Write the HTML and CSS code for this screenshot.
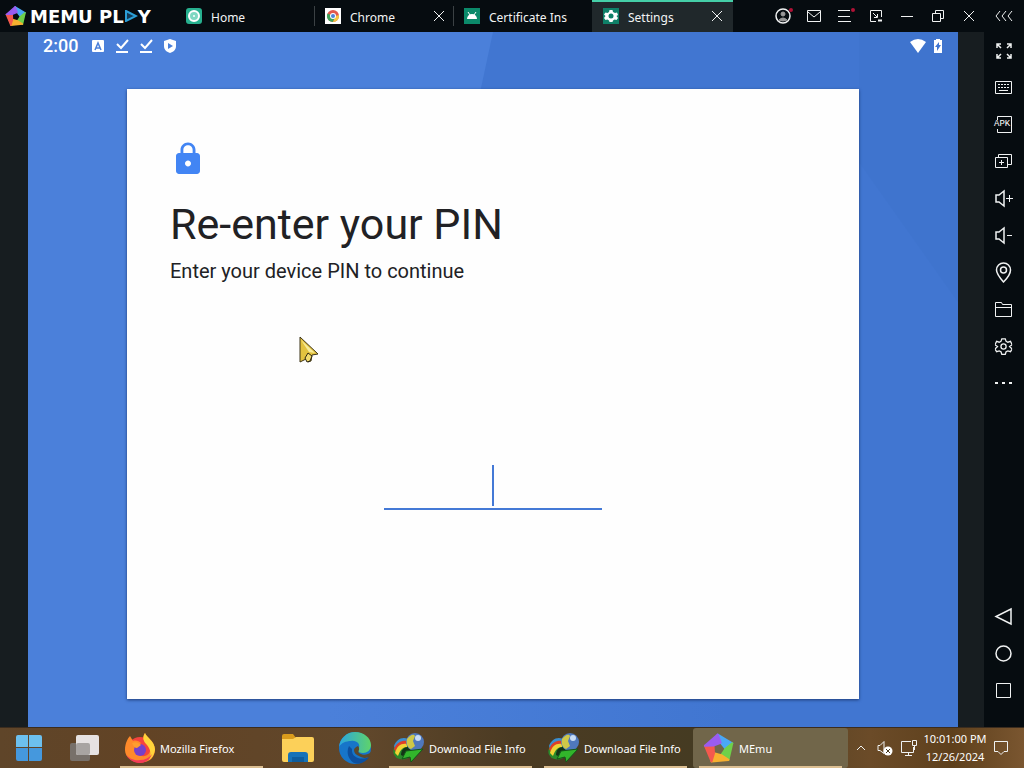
FILE: index.html
```html
<!DOCTYPE html>
<html lang="en">

<head>
    <meta charset="UTF-8">
    <meta name="viewport" content="width=device-width, initial-scale=1.0">
    <title>MEmu - Settings</title>
    <link rel="stylesheet" href="styles.css">
</head>

<body>
    <!-- shared shapes -->
    <svg class="defs" width="0" height="0" aria-hidden="true">
        <symbol id="memu" viewBox="0 0 32 32">
            <g stroke-width="2" stroke-linejoin="round">
                <path fill="#4aa8f5" stroke="#4aa8f5" d="M14.700 2.600 29.300 11.300 22.500 16.700 17.700 10.700z" />
                <path fill="#6fd04a" stroke="#6fd04a" d="M29.300 11.300 25.500 27.900 18.300 23.100 22.500 16.700z" />
                <path fill="#f7b02f" stroke="#f7b02f" d="M25.500 27.900 8.500 29.400 11 21.100 18.300 23.100z" />
                <path fill="#f4594e" stroke="#f4594e" d="M8.500 29.400 1.900 13.700 10.500 13.500 11 21.100z" />
                <path fill="#9a5cf0" stroke="#9a5cf0" d="M1.900 13.700 14.700 2.600 17.700 10.700 10.500 13.500z" />
            </g>
        </symbol>
        <symbol id="idm" viewBox="0 0 32 32">
            <ellipse cx="11" cy="18" rx="11" ry="9" fill="#2a8a2a" transform="rotate(-25 11 18)" />
            <path fill="#3b8fd0" d="M1 14C3 8 9 4 15 7l-1 3C9 9 5 11 2 17z" />
            <path fill="#dd3f28" d="M1 17C4 10 9 8 15 9l-1 3C9 12 6 14 3 20z" />
            <path fill="#f0d235" d="M2 21c2-7 6-10 12-9v3c-4 0-7 3-9 9z" />
            <path fill="#123417" d="M8 23c0-5 3-8 7-8l4 5-7 5z" />
            <circle cx="22" cy="10" r="9" fill="#4f78bd" />
            <path fill="#cfc848" d="M14 7c4-5 7-5 8-3l-2 5 2 5-4 3c-4-2-5-6-4-10z" />
            <circle cx="25" cy="6" r="3" fill="#c9dcf5" />
            <path fill="#32b52b" stroke="#14551a" d="M13 19l17-2-12 13-1-5-8 2z" />
        </symbol>
        <symbol id="download-done" viewBox="0 0 16 16">
            <path fill="none" stroke="#fff" stroke-width="2" d="M3 6l4 4 7-8M2 14h12" />
        </symbol>
        <symbol id="close" viewBox="0 0 12 12">
            <path d="M1 1l10 10M11 1L1 11" />
        </symbol>
        <symbol id="gear" viewBox="0 0 20 20">
            <path d="M8 1h4l1 3 2 1 3-1 2 4-3 2 3 3-2 3-3-1-2 1-1 3H8l-1-3-2-1-3 1-2-3 3-3-3-2 2-4 3 1 2-1z" />
            <circle cx="10" cy="10" r="3" />
        </symbol>
    </svg>

    <header id="titlebar">
        <div class="brand">
            <svg width="22" height="22"><use href="#memu" /></svg>
            <span class="brand-name">MEMU PL<svg width="14" height="12" viewBox="0 0 14 12"><path fill="#123a56" stroke="#2b9fd8" stroke-width="2" d="M2 1l10 5-10 5z" /></svg>Y</span>
        </div>
        <nav class="tabs">
            <div class="tab">
                <svg class="tab-icon" viewBox="0 0 16 16">
                    <rect width="16" height="16" rx="3" fill="#27b08f" />
                    <circle cx="8" cy="8" r="5" fill="#7fd8c2" stroke="#fff" stroke-width="2" />
                    <circle cx="8" cy="8" r="1" fill="#fff" />
                </svg>
                <a href="#home">Home</a>
            </div>
            <div class="tab">
                <svg class="tab-icon" viewBox="0 0 16 16">
                    <rect width="16" height="16" fill="#fff" />
                    <circle cx="8" cy="8" r="6" fill="#e2574c" />
                    <path fill="#3fa35c" d="M2.500 5.500A6 6 0 0 0 8 14l2-5z" />
                    <path fill="#f3c543" d="M14 7a6 6 0 0 1-6 7l2.500-6z" />
                    <circle cx="8" cy="8" r="3" fill="#fff" />
                    <circle cx="8" cy="8" r="2" fill="#4c83d8" />
                </svg>
                <a href="#chrome">Chrome</a>
                <button class="tab-close" aria-label="Close Chrome"><svg width="12" height="12"><use href="#close" /></svg></button>
            </div>
            <div class="tab">
                <svg class="tab-icon" viewBox="0 0 16 16">
                    <rect width="16" height="16" fill="#0b8a6a" />
                    <path fill="#fff" d="M3 11a5 5 0 0 1 10 0z" />
                    <path stroke="#fff" d="M4 4l2 3M12 4l-2 3" />
                </svg>
                <a href="#certificate">Certificate Ins</a>
            </div>
            <div class="tab active">
                <svg class="tab-icon" viewBox="0 0 16 16">
                    <rect width="16" height="16" fill="#0f8068" />
                    <path fill="#fff" d="M6.500 2h3l.5 2 2 1 2-.5 1 2.500L13.500 8 15 10l-1.500 2-2-.5L10 12.500 9.500 14h-3L6 12.500 4.500 11.500l-2 .5L1 10l1.500-2L1 6.500l1.500-2 2 .5L6 4z" />
                    <circle cx="8" cy="8" r="2.500" fill="#0f8068" />
                </svg>
                <a href="#settings">Settings</a>
                <button class="tab-close" aria-label="Close Settings"><svg width="12" height="12"><use href="#close" /></svg></button>
            </div>
        </nav>
        <div class="window-controls">
            <button aria-label="Account" class="dot">
                <svg width="16" height="16" viewBox="0 0 16 16"><circle cx="8" cy="8" r="7" stroke-width="1.500" /><circle cx="8" cy="6" r="2" fill="#999" stroke="#999" /><path fill="#999" stroke="#999" d="M4 12q4-4 8 0-4 2-8 0z" /></svg>
            </button>
            <button aria-label="Messages">
                <svg width="14" height="12" viewBox="0 0 14 12"><path d="M.5.5h13v11H.5zM1 2l6 5 6-5" /></svg>
            </button>
            <button aria-label="Menu" class="dot">
                <svg width="14" height="12" viewBox="0 0 14 12"><path d="M0 .5h12M0 6.500h12M0 11.500h13" /></svg>
            </button>
            <button aria-label="Small window">
                <svg width="14" height="12" viewBox="0 0 14 12"><path d="M7 11.500H1.500V.5h11V7M4 3l4 4M8.500 4v3.500H5" /><path stroke-width="2" d="M9 10.500h4" /></svg>
            </button>
            <button aria-label="Minimize">
                <svg width="12" height="12" viewBox="0 0 12 12"><path d="M0 6.500h12" /></svg>
            </button>
            <button aria-label="Restore">
                <svg width="12" height="12" viewBox="0 0 12 12"><path d="M.5 3.500h8v8h-8zM3.500 3V.5h8v8H9" /></svg>
            </button>
            <button aria-label="Close">
                <svg width="12" height="12"><use href="#close" /></svg>
            </button>
        </div>
        <button class="collapse" aria-label="Hide sidebar">
            <svg width="18" height="10" viewBox="0 0 18 10"><path d="M5 0L1 5l4 5M11 0L7 5l4 5M17 0l-4 5 4 5" /></svg>
        </button>
    </header>

    <div id="emulator">
        <main id="screen">
            <svg class="wallpaper" viewBox="0 0 930 695" preserveAspectRatio="none">
                <defs>
                    <linearGradient id="bandFade"><stop offset="0" stop-color="#4b80da" /><stop offset="1" stop-color="#4176d1" /></linearGradient>
                </defs>
                <rect width="930" height="695" fill="#4b80da" />
                <path fill="#4176d1" d="M465 0h465v695H650L450 70z" />
                <path fill="url(#bandFade)" d="M300 660h400v35H300z" />
                <path fill="#3f74ce" d="M831 0h99v270L831 130z" />
            </svg>
            <div class="status-bar">
                <span class="time">2:00</span>
                <svg viewBox="0 0 16 16"><rect x="2" y="2" width="12" height="12" rx="1" fill="#fff" /><path fill="none" stroke="#4b80da" stroke-width="1.500" d="M5 12l3-7 3 7M6 10h4" /></svg>
                <svg><use href="#download-done" /></svg>
                <svg><use href="#download-done" /></svg>
                <svg viewBox="0 0 16 16"><path fill="#fff" d="M8 1l6 2v5c0 4-3 6-6 7-3-1-6-3-6-7V3z" /><path fill="#4b80da" d="M6 5l5 3-5 3z" /></svg>
                <svg class="wifi" viewBox="0 0 16 16"><path fill="#fff" d="M0 4q8-6 16 0L8 15z" /></svg>
                <svg viewBox="0 0 16 16"><path fill="#fff" d="M6 1h4v1h2v13H4V2h2z" /><path fill="#4176d1" d="M9 4L5 9h2v4l4-6H9z" /></svg>
            </div>
            <section class="card">
                <svg class="lock" viewBox="0 0 24 24"><path fill="#4285f4" d="M18 8h-1V6c0-2.760-2.240-5-5-5S7 3.240 7 6v2H6c-1.100 0-2 .9-2 2v10c0 1.100.9 2 2 2h12c1.100 0 2-.9 2-2V10c0-1.100-.9-2-2-2zm-6 9c-1.100 0-2-.9-2-2s.9-2 2-2 2 .9 2 2-.9 2-2 2zm3.100-9H8.900V6c0-1.710 1.390-3.100 3.100-3.100s3.100 1.390 3.100 3.100v2z" /></svg>
                <h1>Re-enter your PIN</h1>
                <label for="pin">Enter your device PIN to continue</label>
                <div class="pin-field">
                    <input id="pin" type="password" inputmode="numeric">
                    <span class="caret"></span>
                </div>
            </section>
            <svg class="pointer" width="20" height="28" viewBox="0 0 20 28"><path fill="#e3c33f" stroke="#3d3418" d="M1 1l18 17-6 1-1 6-3 1-2-3-6 3z" /><path fill="#f7ec9c" d="M2 4l14 13-6-1z" /><path fill="#f3dd6e" stroke="#2c2613" d="M6 22l3-5 4 3-2 5-3 1z" /></svg>
        </main>
        <aside id="sidebar">
            <button aria-label="Full screen"><svg viewBox="0 0 20 20"><path stroke-width="1.500" d="M3 7V3h4M3 3l4 4M13 3h4v4M17 3l-4 4M3 13v4h4M3 17l4-4M17 13v4h-4M17 17l-4-4" /></svg></button>
            <button aria-label="Keyboard mapping"><svg viewBox="0 0 20 20"><path d="M1.500 3.500h16v12h-16zM5 12.500h9" /><path stroke-dasharray="2 1" d="M4 6.500h11M4 9.500h11" /></svg></button>
            <button aria-label="Install APK" class="apk"><svg viewBox="0 0 20 20"><path d="M3.500 5V1.500h14v16h-14V14" /></svg><span>APK</span></button>
            <button aria-label="Multi window"><svg viewBox="0 0 20 20"><path d="M1.500 5.500h12v10h-12zM4.500 5V2.500h13v10H14M5 10.500h5M7.500 8v5" /></svg></button>
            <button aria-label="Volume up"><svg viewBox="0 0 20 20"><path stroke-width="1.500" d="M2 6v7h3l5 4V2L5 6z" /><path d="M12 9.500h7M15.500 6v7" /></svg></button>
            <button aria-label="Volume down"><svg viewBox="0 0 20 20"><path stroke-width="1.500" d="M2 6v7h3l5 4V2L5 6z" /><path d="M13 9.500h5" /></svg></button>
            <button aria-label="Location"><svg class="tall" viewBox="0 0 20 24"><path stroke-width="1.500" d="M9.500 21C6 17 2.500 13 2.500 9a7 7 0 0 1 14 0c0 4-3 8-7 12z" /><circle cx="9.500" cy="9" r="3" stroke-width="1.500" /></svg></button>
            <button aria-label="Shared folder"><svg viewBox="0 0 20 20"><path d="M1.500 16.500v-14h6l1 2h9v12zM2 7.500h15" /></svg></button>
            <button aria-label="Settings"><svg viewBox="-1 -1 22 22"><use href="#gear" stroke-width="1.500" width="19" height="19" /></svg></button>
            <button aria-label="More"><svg viewBox="0 0 20 20"><path stroke-width="2" stroke-dasharray="3 4" d="M1 9h18" /></svg></button>
            <button aria-label="Back" class="nav-first"><svg viewBox="0 0 20 20"><path stroke-width="1.500" d="M17 2v15L2 9.500z" /></svg></button>
            <button aria-label="Home"><svg viewBox="0 0 20 20"><circle cx="9.500" cy="9.500" r="7.500" stroke-width="1.500" /></svg></button>
            <button aria-label="Recent apps"><svg viewBox="0 0 20 20"><path d="M2.500 2.500h14v14h-14z" /></svg></button>
        </aside>
    </div>

    <footer id="taskbar">
        <button class="pinned" aria-label="Start">
            <svg width="26" height="26" viewBox="0 0 26 26"><path fill="#6dc0ee" d="M0 2q0-2 2-2h10v12H0zM13 0h11q2 0 2 2v10H13z" /><path fill="#4598dd" d="M0 13h12v13H2q-2 0-2-2zM13 13h13v11q0 2-2 2H13z" /></svg>
        </button>
        <button class="pinned" aria-label="Task view">
            <svg width="32" height="28" viewBox="0 0 32 28"><rect x="0" y="9" width="20" height="18" rx="2" fill="#77706a" /><rect x="6" y="1" width="23" height="20" rx="2" fill="#e6e2e2" /><rect x="6" y="9" width="14" height="12" rx="2" fill="#a8a4a2" /></svg>
        </button>
        <button class="window">
            <svg width="32" height="32" viewBox="0 0 32 32"><circle cx="16" cy="18" r="13" fill="#f4433e" /><path fill="#ff8a2a" d="M1 18C1 11 4 6 6 4l3 5c3-1 6 0 8 2l-4 4 1 7c5 5 14 1 12-7L19 7c0-3 1-5 2-6 1 4 9 7 10 16 0 9-6 13-12 13C9 31 1 26 1 18z" /><path fill="#ffd43b" d="M21 1c1 4 10 8 10 17-1 5-3 8-6 10 3-7 1-11-2-15-3-3-5-6-2-12z" /><circle cx="16" cy="18" r="6" fill="#7640c9" /><path fill="#ff9d2e" d="M8 11c4-2 7 0 9 2l-4 3c-2 0-4-2-5-5z" /><path fill="#f23b58" d="M2 22c3 5 9 7 14 6 5 0 9-2 12-6-2 6-7 9-13 9C8 30 4 27 2 22z" /></svg>
            Mozilla Firefox
        </button>
        <button class="pinned" aria-label="File Explorer">
            <svg width="32" height="28" viewBox="0 0 32 28"><path fill="#d99b1c" d="M0 2q0-2 2-2h9l3 4h16v6H0z" /><path fill="#fcd059" d="M0 5h11l3-2h16q2 0 2 2v21q0 2-2 2H2q-2 0-2-2z" /><path fill="#1672b8" d="M6 28v-7q0-3 3-3h14q3 0 3 3v7h-4v-4H10v4z" /><path fill="#0e5d9e" d="M10 23h12v5H10z" /></svg>
        </button>
        <button class="pinned" aria-label="Microsoft Edge">
            <svg width="34" height="34" viewBox="0 0 34 34">
                <defs><linearGradient id="edgeTop"><stop offset="0" stop-color="#2aa5df" /><stop offset="1" stop-color="#5fd36a" /></linearGradient></defs>
                <circle cx="17" cy="17" r="16" fill="#1775c9" />
                <path fill="url(#edgeTop)" d="M1 16C2 7 9 1 17 1c9 0 16 6 16 13 0 5-4 8-8 8-3 0-5-1-5-3 4-6-2-10-7-9-5 0-10 2-12 6z" />
                <path fill="#0d4f9e" d="M11 15c-3 6-1 13 5 17 6 2 12-1 15-6-9 4-18 0-17-8z" />
                <path fill="#5c482c" d="M20 15c3 4-1 5 1 7 4 3 9 2 12-1v4c-5 3-9 2-12 0-3-1-5-3-5-6 0-2 2-3 4-4z" />
            </svg>
        </button>
        <button class="window">
            <svg width="32" height="32"><use href="#idm" /></svg>
            Download File Info
        </button>
        <button class="window">
            <svg width="32" height="32"><use href="#idm" /></svg>
            Download File Info
        </button>
        <button class="window current">
            <svg width="32" height="32"><use href="#memu" /></svg>
            MEmu
        </button>
        <div class="tray">
            <button aria-label="Show hidden icons"><svg width="10" height="6" viewBox="0 0 10 6"><path d="M1 5l4-4 4 4" /></svg></button>
            <button aria-label="Volume muted"><svg width="16" height="16" viewBox="0 0 16 16"><path d="M1 5.500v5h2l4 3v-12l-4 4z" /><circle cx="11" cy="11" r="4.500" fill="#fff" stroke="none" /><path stroke="#4a3a20" d="M9 9l4 4M13 9l-4 4" /></svg></button>
            <button aria-label="Network"><svg width="18" height="18" viewBox="0 0 18 18"><path d="M11 2.500H1.500v11h12V8M5 16.500h7M8.500 14v2M12.500 1.500h4v5h-4zM14.500 7v4" /></svg></button>
            <div class="clock">
                <span>10:01:00 PM</span>
                <span>12/26/2024</span>
            </div>
            <button aria-label="Notifications"><svg width="16" height="16" viewBox="0 0 16 16"><path d="M1.500 1.500h13v10H11l-3 3-3-3H1.500z" /></svg></button>
        </div>
    </footer>
</body>

</html>
```

FILE: styles.css
```css
* {
    box-sizing: border-box;
}

body {
    margin: 0;
    height: 100vh;
    display: flex;
    flex-direction: column;
    overflow: hidden;
    background-color: #060c10;
    color: #fff;
    font-family: 'Noto Sans', sans-serif;
    font-size: 12px;
}

.defs {
    position: absolute;
}

button {
    padding: 0;
    border: none;
    background: none;
    color: inherit;
    font: inherit;
    display: flex;
    align-items: center;
    justify-content: center;
}

svg {
    display: block;
    flex: none;
}

/* title bar */
#titlebar {
    height: 32px;
    flex: none;
    display: flex;
    align-items: stretch;
}

#titlebar button svg,
#sidebar svg,
.tray svg {
    fill: none;
    stroke: #f0f2f2;
}

.brand {
    width: 175px;
    padding-left: 5px;
    display: flex;
    align-items: center;
    gap: 3px;
}

.brand-name {
    display: flex;
    align-items: center;
    white-space: pre;
    font-family: 'DejaVu Sans', sans-serif;
    font-weight: bold;
    font-size: 18px;
}

.tabs {
    flex: 1;
    display: flex;
}

.tab {
    flex: 0 1 139px;
    padding: 0 8px 0 11px;
    display: flex;
    align-items: center;
    gap: 9px;
}

.tab + .tab {
    background: linear-gradient(#3b4144, #3b4144) 0 6px / 1px 20px no-repeat;
}

.tab.active {
    background: #20282b;
    border-top: 2px solid #45cfa8;
    flex-basis: 141px;
    padding-right: 10px;
}

.tab.active .tab-icon,
.tab.active a,
.tab.active button {
    margin-top: -2px;
}

.tab-icon {
    width: 16px;
    height: 16px;
}

.tab a {
    flex: 1;
    padding-top: 2px;
    color: #f2f4f4;
    text-decoration: none;
    white-space: nowrap;
}

.window-controls {
    display: flex;
}

.window-controls button {
    width: 31px;
    position: relative;
}

.dot::after {
    content: '';
    position: absolute;
    top: 8px;
    right: 5px;
    width: 4px;
    height: 4px;
    border-radius: 50%;
    background: #b01236;
}

.collapse {
    width: 40px;
}

/* android screen + toolbar */
#emulator {
    flex: 1;
    min-height: 0;
    display: flex;
    background: #171d20;
    padding-left: 28px;
}

#screen {
    position: relative;
    flex: 1;
    display: flex;
    flex-direction: column;
    margin-right: 26px;
    font-family: Roboto, sans-serif;
}

.wallpaper {
    position: absolute;
    width: 100%;
    height: 100%;
}

.status-bar {
    position: relative;
    height: 27px;
    padding: 0 12px 0 15px;
    display: flex;
    align-items: center;
    gap: 8px;
}

.status-bar svg {
    width: 16px;
    height: 16px;
}

.status-bar .time {
    margin-right: 4px;
    font-size: 18px;
    font-weight: 500;
}

.status-bar .wifi {
    margin-left: auto;
    margin-right: -4px;
}

.card {
    position: relative;
    flex: 1;
    margin: 30px 99px 28px;
    padding: 52px 43px 0;
    display: flex;
    flex-direction: column;
    align-items: flex-start;
    background: #fefefe;
    color: #212124;
    box-shadow: 0 1px 3px #1d3c78;
}

.lock {
    width: 36px;
    height: 36px;
}

.card h1 {
    margin: 21px 0 8px;
    font-size: 43px;
    line-height: 52px;
    font-weight: 400;
}

.card label {
    font-size: 20px;
    line-height: 26px;
}

.pin-field {
    position: relative;
    align-self: center;
    width: 218px;
    margin-top: 176px;
}

.pin-field input {
    display: block;
    width: 100%;
    height: 50px;
    padding: 0;
    border: none;
    border-bottom: 2px solid #4479d6;
    background: none;
    text-align: center;
    font-size: 36px;
    outline: none;
}

.caret {
    position: absolute;
    left: calc(50% - 1px);
    top: 5px;
    width: 2px;
    height: 41px;
    background: #4479d6;
}

.pointer {
    position: absolute;
    left: 271px;
    top: 304px;
}

#sidebar {
    width: 40px;
    padding-bottom: 18px;
    display: flex;
    flex-direction: column;
    background: #060c10;
}

#sidebar button {
    height: 37px;
}

#sidebar svg {
    width: 20px;
    height: 20px;
}

#sidebar svg.tall {
    height: 24px;
}

#sidebar .nav-first {
    margin-top: auto;
}

.apk {
    position: relative;
}

.apk span {
    position: absolute;
    left: 10px;
    background: #060c10;
    font: 9px/9px 'Liberation Mono', monospace;
}

/* taskbar */
#taskbar {
    height: 41px;
    flex: none;
    display: flex;
    background: linear-gradient(to right, #5f4529, #624325 14%, #60472b 36%, #4b3b23 50%, #453b22 68%, #6b4b28 85%, #5e401c 93%, #7a5630);
    border-top: 1px solid #3b2c1e;
    font-size: 11px;
}

.pinned {
    width: 57px;
}

.window {
    flex: 0 1 155px;
    position: relative;
    padding-left: 10px;
    gap: 4px;
    justify-content: flex-start;
    white-space: nowrap;
}

.window::after {
    content: '';
    position: absolute;
    left: 6px;
    right: 6px;
    bottom: 0;
    height: 2px;
    background: #dcbf92;
}

.window.current {
    background: #71664a;
    border-radius: 3px;
}

.tray {
    margin-left: auto;
    padding-right: 11px;
    display: flex;
    align-items: center;
}

.tray button {
    width: 24px;
    height: 40px;
}

.clock {
    width: 68px;
    display: flex;
    flex-direction: column;
    align-items: center;
    line-height: 18px;
}
```
